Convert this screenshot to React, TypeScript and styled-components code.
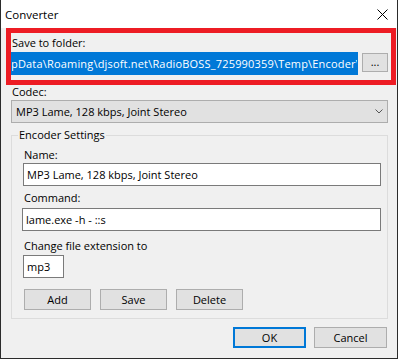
import React from 'react'
import styled, { createGlobalStyle } from 'styled-components'

const GlobalStyle = createGlobalStyle`
  html, body {
    margin: 0;
    padding: 0;
    background: #f0f0f0;
  }
  body {
    font-family: "Open Sans", "Noto Sans", sans-serif;
    font-size: 11px;
    color: #000;
  }
  * {
    box-sizing: border-box;
  }
`

const Window = styled.div`
  width: 398px;
  height: 359px;
  border: 1px solid #2b2b2b;
  border-top: none;
  background: #f0f0f0;
  display: flex;
  flex-direction: column;
`

const TitleBar = styled.div`
  height: 28px;
  flex: none;
  background: #fff;
  display: flex;
  align-items: center;
  justify-content: space-between;
  padding: 0 9px 0 4px;
  font-size: 11.5px;
`

const Content = styled.div`
  display: flex;
  flex-direction: column;
  padding: 0 9px 0 10px;
`

const Highlight = styled.div`
  margin: 0 -8px 0 -5px;
  border: 5px solid #ed1c24;
  padding: 3px 0 5px 0;
  display: flex;
  flex-direction: column;
`

const Label = styled.div<{ $top?: number; $left?: number }>`
  line-height: 14px;
  height: 14px;
  margin-top: ${(p) => p.$top ?? 0}px;
  padding-left: ${(p) => p.$left ?? 1}px;
  white-space: nowrap;
`

const Row = styled.div<{ $top?: number }>`
  display: flex;
  align-items: flex-start;
  gap: 4px;
  margin-top: ${(p) => p.$top ?? 0}px;
`

const FolderInput = styled.div`
  width: 347px;
  height: 23px;
  border: 1px solid #0078d7;
  background: #fff;
  padding: 0 2px 0 0;
  overflow: hidden;
  display: flex;
`

const Selected = styled.span`
  background: #0078d7;
  color: #fff;
  line-height: 21px;
  white-space: nowrap;
  margin-left: -1px;
  letter-spacing: 0.18px;
`

const SmallButton = styled.div`
  width: 26px;
  height: 19px;
  margin-top: 1px;
  border: 1px solid #adadad;
  background: #e1e1e1;
  display: flex;
  align-items: center;
  justify-content: center;
  line-height: 1;
  padding-bottom: 2px;
`

const Combo = styled.div`
  height: 23px;
  margin-top: 1px;
  border: 1px solid #adadad;
  background: #e1e1e1;
  display: flex;
  align-items: center;
  justify-content: space-between;
  padding: 0 4px 0 4px;
`

const Group = styled.fieldset`
  margin: 5px 0 0 0;
  border: 1px solid #dcdcdc;
  padding: 6px 6px 8px 11px;
  min-width: 0;
  display: flex;
  flex-direction: column;
`

const Legend = styled.legend`
  line-height: 14px;
  padding: 0 1px;
  margin-left: -5px;
`

const TextBox = styled.div<{ $width?: number; $top?: number; $left?: number }>`
  width: ${(p) => (p.$width ? `${p.$width}px` : 'auto')};
  height: 23px;
  margin-top: ${(p) => p.$top ?? 0}px;
  margin-left: ${(p) => p.$left ?? 0}px;
  border: 1px solid #7a7a7a;
  background: #fff;
  padding: 0 3px;
  line-height: 21px;
  white-space: nowrap;
  overflow: hidden;
`

const ButtonRow = styled.div`
  display: flex;
  gap: 9px;
  margin: 11px 0 0 1px;
`

const Button = styled.div<{ $width: number; $default?: boolean }>`
  width: ${(p) => p.$width}px;
  height: 21px;
  border: ${(p) => (p.$default ? '2px solid #0078d7' : '1px solid #adadad')};
  background: #e1e1e1;
  display: flex;
  align-items: center;
  justify-content: center;
  padding-bottom: 1px;
`

const Footer = styled.div`
  display: flex;
  justify-content: flex-end;
  gap: 8px;
  margin: 8px 1px 0 0;
`

const CloseIcon = () => (
  <svg width="11" height="11" viewBox="0 0 11 11">
    <path d="M0.5 0.5 L10.5 10.5 M10.5 0.5 L0.5 10.5" stroke="#000" strokeWidth="1" fill="none" />
  </svg>
)

const Chevron = () => (
  <svg width="8" height="5" viewBox="0 0 8 5">
    <path d="M0.5 0.5 L4 4 L7.5 0.5" stroke="#555" strokeWidth="1" fill="none" />
  </svg>
)

const App = () => {
  return (
    <>
      <GlobalStyle />
      <Window>
        <TitleBar>
          <span>Converter</span>
          <CloseIcon />
        </TitleBar>
        <Content>
          <Highlight>
            <Label>Save to folder:</Label>
            <Row $top={2}>
              <FolderInput>
                <Selected>pData\Roaming\djsoft.net\RadioBOSS_725990359\Temp\Encoder\</Selected>
              </FolderInput>
              <SmallButton>...</SmallButton>
            </Row>
          </Highlight>
          <Label>Codec:</Label>
          <Combo>
            <span>MP3 Lame, 128 kbps, Joint Stereo</span>
            <Chevron />
          </Combo>
          <Group>
            <Legend>Encoder Settings</Legend>
            <Label>Name:</Label>
            <TextBox $top={1}>MP3 Lame, 128 kbps, Joint Stereo</TextBox>
            <Label $top={5}>Command:</Label>
            <TextBox $top={3} $left={-1}>lame.exe -h - ::s</TextBox>
            <Label $top={8}>Change file extension to</Label>
            <TextBox $top={2} $width={41}>mp3</TextBox>
            <ButtonRow>
              <Button $width={67}>Add</Button>
              <Button $width={67}>Save</Button>
              <Button $width={67}>Delete</Button>
            </ButtonRow>
          </Group>
          <Footer>
            <Button $width={73} $default>OK</Button>
            <Button $width={73}>Cancel</Button>
          </Footer>
        </Content>
      </Window>
    </>
  )
}

export default App
